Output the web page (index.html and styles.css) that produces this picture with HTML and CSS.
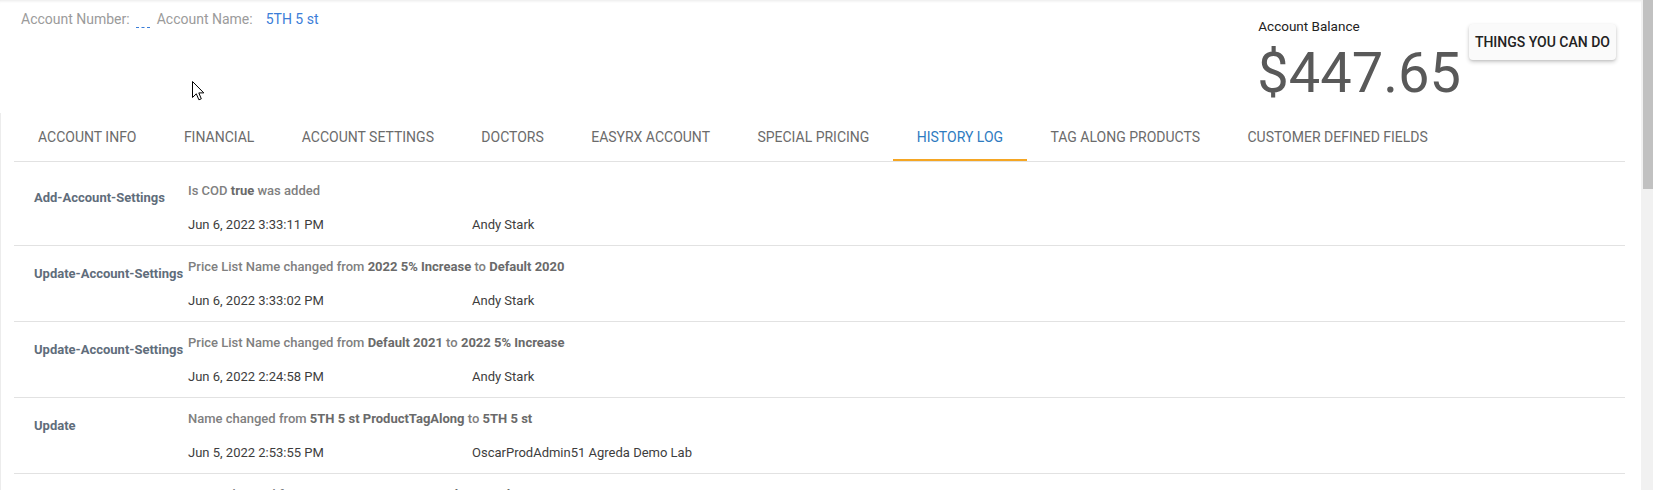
FILE: index.html
```html
<!DOCTYPE html>
<html lang="en">
<head>
<meta charset="utf-8">
<title>History Log</title>
<link rel="stylesheet" href="styles.css">
</head>
<body>
<div class="app">
  <div class="main">
    <header class="header">
      <div class="acct">
        <span class="lbl">Account Number:</span><span class="num-empty"></span><span class="lbl">Account Name:</span><a class="link" href="#">5TH 5 st</a>
      </div>
      <div class="right">
        <div class="balance">
          <div class="bal-label">Account Balance</div>
          <div class="bal-value">$447.65</div>
        </div>
        <button class="things">THINGS YOU CAN DO</button>
      </div>
    </header>
    <div class="content">
      <nav class="tabs">
        <div class="tab">ACCOUNT INFO</div>
        <div class="tab">FINANCIAL</div>
        <div class="tab">ACCOUNT SETTINGS</div>
        <div class="tab">DOCTORS</div>
        <div class="tab">EASYRX ACCOUNT</div>
        <div class="tab">SPECIAL PRICING</div>
        <div class="tab active">HISTORY LOG</div>
        <div class="tab">TAG ALONG PRODUCTS</div>
        <div class="tab">CUSTOMER DEFINED FIELDS</div>
      </nav>
      <div class="list">
        <div class="row">
          <div class="row-label">Add-Account-Settings</div>
          <div class="row-body">
            <div class="desc">Is COD <b>true</b> was added</div>
            <div class="meta"><span class="date">Jun 6, 2022 3:33:11 PM</span><span class="user">Andy Stark</span></div>
          </div>
        </div>
        <div class="row">
          <div class="row-label">Update-Account-Settings</div>
          <div class="row-body">
            <div class="desc">Price List Name changed from <b>2022 5% Increase</b> to <b>Default 2020</b></div>
            <div class="meta"><span class="date">Jun 6, 2022 3:33:02 PM</span><span class="user">Andy Stark</span></div>
          </div>
        </div>
        <div class="row">
          <div class="row-label">Update-Account-Settings</div>
          <div class="row-body">
            <div class="desc">Price List Name changed from <b>Default 2021</b> to <b>2022 5% Increase</b></div>
            <div class="meta"><span class="date">Jun 6, 2022 2:24:58 PM</span><span class="user">Andy Stark</span></div>
          </div>
        </div>
        <div class="row">
          <div class="row-label">Update</div>
          <div class="row-body">
            <div class="desc">Name changed from <b>5TH 5 st ProductTagAlong</b> to <b>5TH 5 st</b></div>
            <div class="meta"><span class="date">Jun 5, 2022 2:53:55 PM</span><span class="user">OscarProdAdmin51 Agreda Demo Lab</span></div>
          </div>
        </div>
        <div class="row">
          <div class="row-label">Update</div>
          <div class="row-body">
            <div class="desc">Name changed from <b>5TH 5 st</b> to <b>5TH 5 st ProductTagAlong</b></div>
            <div class="meta"><span class="date">Jun 5, 2022 2:50:12 PM</span><span class="user">OscarProdAdmin51 Agreda Demo Lab</span></div>
          </div>
        </div>
      </div>
    </div>
    <svg class="cursor" width="13" height="20" viewBox="0 0 13 20" aria-hidden="true">
      <path d="M0.5 0.5 L0.5 16.5 L4.3 12.8 L6.9 18.8 L9.3 17.8 L6.8 11.9 L11.8 11.9 Z" fill="#fff" stroke="#000" stroke-width="1" stroke-linejoin="round"/>
    </svg>
  </div>
  <div class="scrollbar"><div class="thumb"></div></div>
</div>
</body>
</html>
```
FILE: styles.css
```css
html, body {
  margin: 0;
  padding: 0;
  height: 100%;
  overflow: hidden;
  background: #fff;
}

body {
  font-family: Roboto, "Liberation Sans", Arial, sans-serif;
}

.app {
  display: flex;
  width: 1653px;
  height: 490px;
  overflow: hidden;
}

.main {
  flex: 1;
  min-width: 0;
  position: relative;
  box-shadow: inset 0 3px 3px -2px rgba(0, 0, 0, 0.09);
}

/* header */
.header {
  height: 113px;
  display: flex;
  justify-content: space-between;
  align-items: flex-start;
}

.acct {
  padding: 11px 0 0 21px;
  font-size: 14px;
  line-height: 16px;
}

.lbl {
  color: #9b9b9b;
}

.num-empty {
  display: inline-block;
  width: 14px;
  height: 0;
  border-bottom: 1px dashed #3b7dd8;
  margin: 0 7px 0 6px;
  vertical-align: -4px;
}

.link {
  color: #3b7dd8;
  margin-left: 13px;
  text-decoration: none;
}

.right {
  display: flex;
  align-items: flex-start;
  padding-right: 25px;
}

.balance {
  padding-top: 18px;
  margin-right: 8px;
}

.bal-label {
  font-size: 13.5px;
  line-height: 16px;
  color: #222;
}

.bal-value {
  font-size: 56px;
  line-height: 56px;
  margin-top: 11px;
  color: #595959;
  margin-left: -1px;
}

.things {
  margin-top: 24px;
  height: 36px;
  padding: 0 6px;
  font-family: Roboto, "Liberation Sans", Arial, sans-serif;
  font-weight: 500;
  font-size: 14px;
  color: #222;
  background: #fafafa;
  border: 0;
  border-radius: 4px;
  box-shadow: 0 2px 4px rgba(0, 0, 0, 0.2), 0 1px 2px rgba(0, 0, 0, 0.08);
  cursor: pointer;
}

/* content */
.content {
  border-left: 1px solid #ececec;
}

.tabs {
  display: flex;
  height: 48px;
  margin: 0 16px 0 13px;
  border-bottom: 1px solid #e2e2e2;
}

.tab {
  position: relative;
  display: flex;
  align-items: center;
  padding: 0 23.7px;
  font-size: 14px;
  color: #6b6b6b;
  white-space: nowrap;
}

.tab:first-child {
  padding-left: 24px;
}

.tab.active {
  color: #2e7bbf;
}

.tab.active::after {
  content: "";
  position: absolute;
  left: 0;
  right: 0;
  bottom: 0;
  height: 2px;
  background: #f5a623;
}

.list {
  margin: 0 16px 0 13px;
  padding-top: 8px;
}

.row {
  display: flex;
  padding: 12px 0 11px 20px;
  border-bottom: 1px solid #e2e2e2;
}

.row-label {
  flex: 0 0 auto;
  min-width: 150px;
  padding: 7px 4px 0 0;
  font-size: 13px;
  line-height: 18px;
  font-weight: 700;
  color: #5f6d7b;
  white-space: nowrap;
}

.row-body {
  display: flex;
  flex-direction: column;
  gap: 16px;
  font-size: 13px;
  line-height: 18px;
}

.desc {
  color: #808080;
  font-weight: 500;
  white-space: nowrap;
}

.desc b {
  color: #6a6a6a;
  font-weight: 700;
}

.meta {
  display: flex;
  color: #3d3d3d;
}

.date {
  width: 284px;
}

.cursor {
  position: absolute;
  left: 192px;
  top: 81px;
}

/* fake scrollbar */
.scrollbar {
  width: 12px;
  background: #f1f1f1;
}

.thumb {
  margin-left: 2px;
  height: 189px;
  background: #c1c1c1;
}
```
